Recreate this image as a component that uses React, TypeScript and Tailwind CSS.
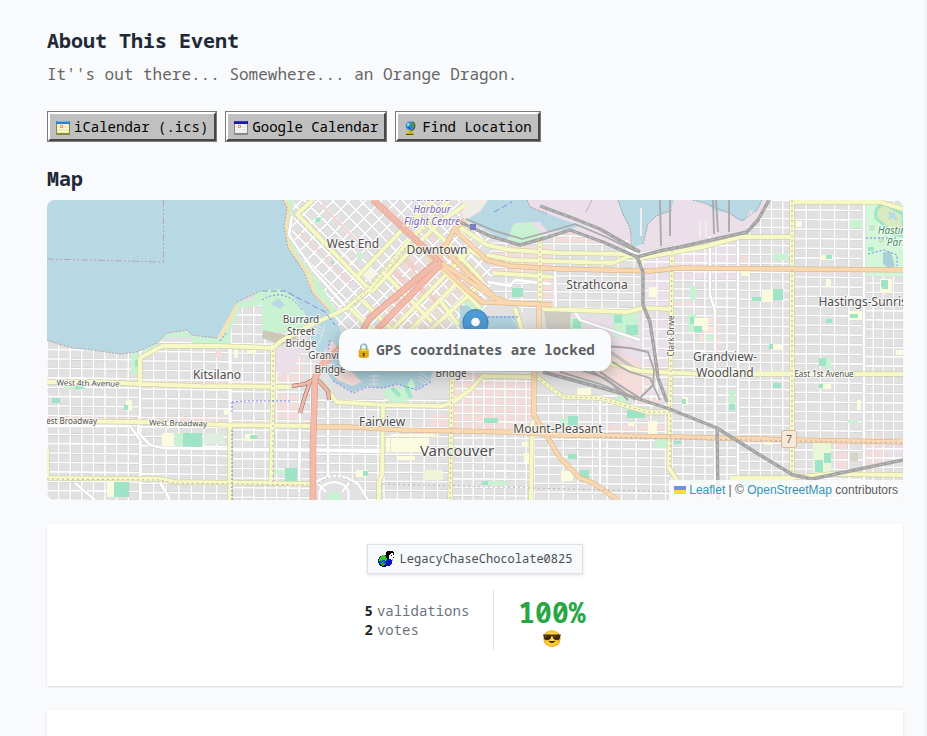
import React from 'react';

const MONO = "font-['Noto_Sans_Mono','DejaVu_Sans_Mono',monospace]";

/* ---------- map data ---------- */

type Region = { x0: number; y0: number; x1: number; y1: number; dx: number; dy: number };

const regions: Region[] = [
  { x0: 47, y0: 340, x1: 141, y1: 500, dx: 11.6, dy: 9.4 },
  { x0: 141, y0: 342, x1: 231, y1: 500, dx: 12.6, dy: 9.4 },
  { x0: 231, y0: 305, x1: 314, y1: 500, dx: 11.4, dy: 9.6 },
  { x0: 314, y0: 400, x1: 384, y1: 500, dx: 12.8, dy: 9 },
  { x0: 384, y0: 400, x1: 452, y1: 500, dx: 13.4, dy: 9 },
  { x0: 452, y0: 372, x1: 534, y1: 500, dx: 10.6, dy: 8.2 },
  { x0: 534, y0: 395, x1: 670, y1: 500, dx: 14.6, dy: 8.8 },
  { x0: 490, y0: 235, x1: 640, y1: 312, dx: 16, dy: 8 },
  { x0: 643, y0: 252, x1: 672, y1: 400, dx: 14, dy: 9.6 },
  { x0: 672, y0: 236, x1: 738, y1: 500, dx: 11, dy: 8.8 },
  { x0: 738, y0: 200, x1: 792, y1: 500, dx: 11.2, dy: 9 },
  { x0: 792, y0: 200, x1: 863, y1: 500, dx: 14.2, dy: 9.6 },
  { x0: 863, y0: 200, x1: 910, y1: 500, dx: 10.2, dy: 9.2 },
];

function gridPath(r: Region): string {
  const parts: string[] = [];
  for (let x = r.x0; x < r.x1; x += r.dx) parts.push(`M${x.toFixed(1)} ${r.y0}V${r.y1}`);
  for (let y = r.y0; y < r.y1; y += r.dy) {
    parts.push(`M${r.x0} ${y.toFixed(1)}L${r.x1} ${(y + (r.x1 - r.x0) * 0.012).toFixed(1)}`);
  }
  return parts.join('');
}

function diagonalPath(): string {
  const parts: string[] = [];
  for (let c = -60; c < 300; c += 14) parts.push(`M${270 + c} 190l170 172`);
  for (let c = 470; c < 830; c += 16) parts.push(`M${c - 190} 190l-170 172`);
  return parts.join('');
}

const orthogonal = regions.map(gridPath).join('');
const diagonal = diagonalPath();

type Patch = [number, number, number, number, string];

const PINK = '#f3dcd9';
const GREEN = '#c9f2d2';
const PITCH = '#9de5c6';
const SCHOOL = '#fbfbe0';
const LILAC = '#ebdfea';

const areas: Patch[] = [
  [493, 246, 60, 16, PINK], [490, 262, 62, 10, PINK], [536, 278, 22, 26, PINK], [552, 232, 82, 10, PINK],
  [672, 248, 66, 34, LILAC], [672, 268, 230, 5, PINK], [643, 255, 30, 54, LILAC], [643, 315, 29, 80, LILAC],
  [453, 374, 82, 54, PINK], [47, 416, 186, 5, PINK], [231, 420, 85, 8, PINK], [272, 358, 32, 24, PINK],
  [272, 395, 26, 24, PINK], [313, 425, 75, 5, PINK], [430, 415, 42, 14, PINK], [452, 425, 218, 8, PINK],
  [140, 380, 170, 4, PINK], [712, 370, 5, 44, PINK], [715, 315, 5, 50, PINK], [833, 440, 14, 30, PINK],
  [866, 436, 20, 34, PINK], [888, 440, 16, 20, LILAC], [700, 318, 14, 26, '#fae3dd'], [742, 252, 8, 24, PINK],
  [640, 395, 20, 10, PINK], [672, 302, 26, 6, PINK], [790, 204, 3, 290, PINK],
];

const patches: Patch[] = [
  [131, 352, 7, 22, GREEN], [135, 360, 4, 7, PITCH], [64, 384, 22, 5, GREEN], [75, 385, 9, 4, PITCH],
  [52, 398, 8, 5, PITCH], [126, 400, 6, 11, SCHOOL], [124, 405, 4, 5, PITCH], [162, 433, 12, 13, SCHOOL],
  [175, 433, 10, 13, GREEN], [183, 433, 19, 14, PITCH], [204, 433, 20, 11, '#dfeee0'], [107, 482, 8, 15, SCHOOL],
  [114, 482, 15, 15, PITCH], [245, 434, 12, 7, SCHOOL], [250, 435, 7, 4, PITCH], [224, 410, 6, 5, SCHOOL],
  [285, 468, 12, 14, PITCH], [274, 470, 10, 4, GREEN], [356, 470, 12, 7, SCHOOL], [363, 471, 5, 5, PITCH],
  [391, 438, 38, 14, SCHOOL], [386, 438, 4, 14, SCHOOL], [397, 456, 18, 4, SCHOOL], [423, 470, 20, 10, '#f0f4d8'],
  [391, 434, 44, 3, SCHOOL], [484, 418, 14, 5, PITCH], [522, 442, 6, 5, SCHOOL], [524, 453, 5, 9, SCHOOL],
  [484, 481, 24, 4, GREEN], [482, 481, 6, 4, PITCH], [561, 471, 12, 10, SCHOOL], [580, 470, 9, 8, PITCH],
  [568, 454, 9, 5, PITCH], [568, 416, 10, 10, PITCH], [560, 418, 7, 8, GREEN], [577, 388, 14, 8, SCHOOL],
  [627, 410, 18, 8, PITCH], [617, 395, 10, 10, GREEN], [648, 421, 9, 13, SCHOOL], [628, 422, 6, 4, SCHOOL],
  [655, 438, 14, 10, GREEN], [512, 288, 11, 9, PITCH], [613, 313, 25, 24, GREEN], [614, 315, 8, 8, PITCH],
  [626, 325, 12, 10, PITCH], [570, 318, 14, 12, GREEN], [573, 319, 8, 9, PITCH], [649, 287, 8, 10, SCHOOL],
  [690, 286, 6, 14, GREEN], [762, 290, 11, 12, SCHOOL], [773, 289, 10, 11, PITCH], [752, 297, 9, 4, PITCH],
  [774, 254, 14, 6, GREEN], [820, 255, 13, 5, SCHOOL], [826, 255, 6, 4, PITCH], [826, 279, 5, 8, SCHOOL],
  [850, 220, 12, 8, GREEN], [796, 221, 6, 6, SCHOOL], [849, 311, 13, 9, SCHOOL], [850, 314, 8, 4, PITCH],
  [826, 319, 6, 4, PITCH], [688, 314, 8, 18, GREEN], [694, 318, 14, 12, SCHOOL], [694, 326, 8, 6, PITCH],
  [706, 335, 7, 5, GREEN], [690, 317, 4, 7, PITCH], [773, 344, 9, 6, SCHOOL], [769, 344, 4, 5, PITCH],
  [741, 271, 9, 5, SCHOOL], [880, 279, 12, 14, SCHOOL], [881, 280, 7, 7, PITCH], [819, 358, 7, 8, PITCH],
  [826, 358, 5, 12, GREEN], [823, 384, 8, 5, SCHOOL], [819, 384, 4, 4, PITCH], [773, 383, 8, 5, PITCH],
  [729, 390, 6, 20, GREEN], [729, 404, 6, 6, PITCH], [682, 397, 6, 8, SCHOOL], [682, 399, 4, 5, PITCH],
  [813, 443, 18, 30, '#eaf6d8'], [815, 460, 8, 12, PITCH], [824, 453, 7, 10, PITCH], [850, 453, 8, 8, '#d9d2c6'],
  [848, 420, 10, 3, GREEN], [741, 476, 40, 12, GREEN], [743, 478, 7, 8, PITCH], [771, 477, 6, 8, PITCH],
  [674, 441, 7, 3, PITCH], [764, 441, 8, 4, SCHOOL], [896, 350, 8, 5, SCHOOL], [857, 400, 4, 10, SCHOOL],
  [315, 217, 7, 6, GREEN], [316, 218, 4, 4, PITCH], [331, 261, 3, 3, PITCH], [357, 253, 6, 6, GREEN],
  [385, 212, 5, 5, GREEN], [690, 480, 22, 4, '#cfe3c2'], [234, 350, 4, 8, SCHOOL],
  [247, 350, 9, 4, SCHOOL], [216, 350, 5, 8, PINK],
];

const yellowRoads = [
  'M47 382L100 382 140 384 200 386 290 387',
  'M140 383V358L162 346 220 346 273 348 281 341 307 327 347 308 368 290 390 265 403 248 440 210 450 200',
  'M273 345V387L271 484',
  'M47 421L140 422 227 425 313 426',
  'M47 478L160 479 174 482 260 483 313 484',
  'M230 425V500',
  'M47 450V478',
  'M320 382L337 402 383 405 443 406 453 402 470 390 483 376 534 377',
  'M383 405L382 475 379 482V500',
  'M452 368L451 440 450 500',
  'M532 422L531 500',
  'M540 236V305',
  'M537 377L563 397 600 398 647 412 670 412',
  'M672 252L671 340 669 468 677 480',
  'M605 362L640 371 700 374H903',
  'M792 200V500',
  'M792 202H880L903 209',
  'M670 253L703 247 740 237H792',
  'M455 224L487 245 510 250 560 253 623 254 640 258 670 253',
  'M487 255L513 260 613 263 630 256',
  'M493 273L553 277',
  'M543 309L627 312 643 308 670 309',
  'M313 200L297 214 357 277 372 292',
  'M357 277L400 232 435 200',
  'M372 292L410 251 440 222 465 205',
  'M350 308L392 350',
  'M362 300L392 330',
  'M383 272L432 322',
  'M410 236L480 308',
  'M392 330L470 250 490 262',
  'M410 330L458 282',
  'M430 330L480 285',
  'M449 245L482 280',
  'M425 222L460 255',
  'M440 300L458 325',
  'M515 308L525 340',
  'M730 478L790 478 830 474 903 475',
];

const orangeRoads = [
  'M313 427L350 427 403 430 513 432 560 435 680 437 797 440 903 442',
  'M534 368V415L560 458 580 478 593 483 618 500',
  'M539 306V330',
  'M453 228L487 260 510 266 560 269 650 271 680 268 903 270',
  'M440 262L493 297 510 303 552 305',
  'M440 245L470 275 493 295',
  'M437 262L465 288 482 302 540 304',
  'M437 262L455 228 465 220',
];

const redRoads = [
  'M313 500V445L315 378 322 365 340 348',
  'M363 330L370 318 437 262',
  'M377 330L441 264',
  'M373 200L400 225 441 264',
];

const ramps = ['M318 377L305 384 292 386', 'M310 382L305 396 300 413', 'M318 380L328 391 329 400'];

const rails = [
  'M460 222L490 236 520 245 545 238 570 230 603 242 637 257 663 250 680 247 747 232 758 220 769 200',
  'M637 257L643 272V305L650 322 655 355 658 378 667 402',
  'M543 372L620 393 667 408 717 428 755 452 793 475 812 479 850 471 903 460',
  'M717 428L718 500',
  'M540 206L570 217 600 229 640 252',
];

const sidings = [
  'M466 219L495 231 522 239 548 232 575 224 606 237 637 252',
  'M605 346L630 348 648 352 654 370 653 385 640 398 627 390 600 372',
  'M612 362L630 372 650 378 660 400',
  'M560 372L600 384 625 394',
  'M575 368L605 378 635 400',
  'M590 370L612 384 628 400',
  'M716 200L718 232',
  'M713 200L714 234',
  'M660 200L661 246',
  'M729 200V232',
  'M670 200V236',
];

const secondary = [
  'M292 216L289 235 313 270 347 308', 'M140 384V412L138 432 150 445 163 448 313 450 383 452', 'M231 450H383',
  'M300 413L299 492', 'M328 400V476', 'M738 238V500', 'M715 310V500', 'M710 236V295L715 310', 'M864 200V500',
  'M600 400V484', 'M488 282L510 286 515 280 550 284', 'M555 268L556 312', 'M575 312L580 320 640 340',
  'M627 240Q620 250 640 254L672 247', 'M47 426H130L140 440', 'M75 483L95 500', 'M160 482L170 500',
];

type Label = { x: number; y: number; s: number; t: string; c?: string; i?: boolean; r?: number };

const labels: Label[] = [
  { x: 353, y: 248, s: 12, t: 'West End' },
  { x: 437, y: 254, s: 12, t: 'Downtown' },
  { x: 432, y: 201, s: 9, t: 'Vancouver', c: '#7b68b5', i: true },
  { x: 432, y: 213, s: 10, t: 'Harbour', c: '#7b68b5', i: true },
  { x: 432, y: 225, s: 10, t: 'Flight Centre', c: '#7b68b5', i: true },
  { x: 597, y: 289, s: 12, t: 'Strathcona' },
  { x: 301, y: 323, s: 10, t: 'Burrard' },
  { x: 301, y: 335, s: 10, t: 'Street' },
  { x: 301, y: 347, s: 10, t: 'Bridge' },
  { x: 329, y: 359, s: 10, t: 'Granville' },
  { x: 330, y: 373, s: 10, t: 'Bridge' },
  { x: 451, y: 377, s: 10, t: 'Bridge' },
  { x: 217, y: 379, s: 12, t: 'Kitsilano' },
  { x: 382, y: 426, s: 12, t: 'Fairview' },
  { x: 457, y: 456, s: 15, t: 'Vancouver' },
  { x: 558, y: 433, s: 12, t: 'Mount-Pleasant' },
  { x: 725, y: 361, s: 12, t: 'Grandview-' },
  { x: 725, y: 377, s: 12, t: 'Woodland' },
  { x: 866, y: 306, s: 12, t: 'Hastings-Sunrise' },
  { x: 897, y: 234, s: 10, t: 'Hastings', c: '#3f8a5c', i: true },
  { x: 897, y: 246, s: 10, t: 'Park', c: '#3f8a5c', i: true },
  { x: 88, y: 386, s: 8, t: 'West 4th Avenue', r: 1 },
  { x: 68, y: 424, s: 8, t: 'West Broadway' },
  { x: 178, y: 426, s: 8, t: 'West Broadway', r: 1 },
  { x: 824, y: 377, s: 8, t: 'East 1st Avenue' },
  { x: 674, y: 336, s: 8, t: 'Clark Drive', r: -90 },
];

const stroke = (paths: string[], color: string, width: number, dash?: string) =>
  paths.map((d) => (
    <path key={d + color} d={d} stroke={color} strokeWidth={width} strokeDasharray={dash} fill="none" strokeLinejoin="round" />
  ));

function CityMap() {
  return (
    <svg
      className="block h-full w-full"
      viewBox="47 200 856 300"
      preserveAspectRatio="xMidYMid slice"
      role="img"
      aria-label="Map of Vancouver"
    >
      <defs>
        <clipPath id="peninsula">
          <path d="M283 200H466L491 238V300L468 332 340 345 300 270Z" />
        </clipPath>
        <clipPath id="flatland">
          <path d="M47 335H231V300H300L340 345V380H452V340L535 300 491 300V238L560 228 640 256 735 236 760 215 772 200H903V500H47Z" />
        </clipPath>
      </defs>

      <rect x="47" y="200" width="856" height="300" fill="#e1e1e1" />
      {areas.map(([x, y, w, h, c]) => (
        <rect key={`${x}-${y}-${w}`} x={x} y={y} width={w} height={h} fill={c} />
      ))}
      <path d="M400 262L437 228 490 280 440 330H380Z" fill="#ecdcd9" />
      <path d="M600 345L655 350 655 385 640 400 600 380 540 375V368Z" fill={PINK} />
      <path d="M556 312L610 320 660 345V372L600 345 556 332Z" fill={LILAC} />

      <g clipPath="url(#flatland)" fill="none">
        <path d={orthogonal} stroke="#cecece" strokeWidth="2.4" />
        <path d={orthogonal} stroke="#fff" strokeWidth="1.6" />
      </g>
      <g clipPath="url(#peninsula)" fill="none">
        <path d={diagonal} stroke="#cacaca" strokeWidth="2.8" />
        <path d={diagonal} stroke="#fff" strokeWidth="2" />
        <path d="M392 270l12 12M404 258l12 12M416 284l10 10M430 296l10 10M410 300l9 9M395 296l9 9M450 270l8 8M425 246l6 6" stroke="#f1cfcb" strokeWidth="5" />
        <path d="M300 232l50 51M322 205l45 46M385 205l30 30" stroke="#f3d6d2" strokeWidth="2" />
        <path d="M362 275L370 267 377 274 369 282Z" fill="#f6f4e4" />
      </g>
      {patches.map(([x, y, w, h, c]) => (
        <rect key={`${x}-${y}-${w}-${h}`} x={x} y={y} width={w} height={h} fill={c} />
      ))}
      <path d="M544 312H571L569 340H548Z" fill="#cfccc3" />
      <path d="M545 340L600 345 640 372" fill="none" stroke="#c5c1c2" strokeWidth="3" />

      {/* port lands and inlet */}
      <path d="M460 200H771L757 222 735 234 680 246 637 255 570 228 520 243 460 220Z" fill={LILAC} />
      <path d="M462 200H492L474 214 463 222Z" fill="#f0ece6" />
      <path d="M488 200H592L586 212 574 216 588 224 566 230 548 232 540 222 515 223 507 240 493 234 466 220 480 212Z" fill="#b8d9e3" />
      <path d="M527 200H592L586 212 612 222 640 250 606 238 575 224 548 214 530 207Z" fill={LILAC} />
      <path d="M507 240L513 225 530 222 545 236 522 243Z" fill={GREEN} />
      <path d="M618 200H674L670 212 656 216 648 224 643 244 633 247 630 228 622 214Z" fill="#b8d9e3" />
      <path d="M693 200H762L757 212 750 210 745 221 738 220 729 213 715 211 707 204Z" fill="#b8d9e3" />
      <path d="M641 208v28M700 222v16M706 222v15" stroke="#f2eeee" strokeWidth="2" />
      <path d="M527 200L530 207 548 214M592 200L586 212M618 200L624 216 630 228 632 247M643 244L648 224 656 216 672 210M693 200L707 204 729 213 742 221 757 210 762 200" fill="none" stroke="#a9a2ab" strokeDasharray="2 1" />

      {/* western parks and beach */}
      <path d="M283 200L294 200 291 232 300 258 318 280 337 312 345 322 330 312 318 302 308 282 286 250Z" fill={GREEN} />
      <path d="M283 200L288 206 287 240 294 256 310 276 314 294 330 310" fill="none" stroke="#f3e2b4" strokeWidth="4" />
      <path d="M137 355L157 343 167 334 187 331 192 336 217 339 237 303 253 299 261 288 285 288 304 308 304 332 262 332 262 305 240 308 230 332 231 344H192V337H166L150 350Z" fill={GREEN} />
      <path d="M220 338L237 304" stroke="#f3e2b4" strokeWidth="4" />
      <path d="M250 295L262 300M263 330L300 338 282 345 262 338Z" fill="#ccc9bb" />
      <path d="M270 347H300L302 352 290 375 276 372Z" fill={LILAC} />
      <path d="M271 304L278 298 285 305 280 309Z" fill="#b8d9e3" />

      {/* English Bay and False Creek */}
      <path
        d="M47 200H283L287 208 284 226 288 248 297 260 304 272 307 282 312 292 323 305 330 312 337 322 345 342 345 352 338 370 318 352 312 345 308 320 302 308 293 297 280 289 262 290 250 296 237 302 217 338 204 337 192 335 187 330 167 333 157 343 137 352 120 354 100 351 73 348 58 344 47 340Z"
        fill="#b8d9e3"
      />
      <path
        d="M47 340L58 344 73 348 100 351 120 354 137 352 157 343 167 333 187 330 192 335 217 338M237 302L250 296 262 290M283 200L287 208 284 226 288 248 304 272 312 292 330 312"
        fill="none" stroke="#b3a5b0" strokeDasharray="2 1.5"
      />
      <path d="M322 366L333 381 353 392 367 386 383 388 397 384 417 389 430 382 434 366Z" fill="#b0d2dd" />
      <path d="M329 370L336 368 352 372 362 382 352 386 338 380Z" fill={PINK} />
      <path d="M383 396L386 388 404 388 412 378 415 386 406 402 390 402Z" fill={GREEN} />
      <path d="M392 388l8 8M405 384l6 14" stroke={PITCH} strokeWidth="4" />
      <path d="M369 376h10M369 380h10M369 384h10M374 374v14M420 372l10 8M418 376l12 8M418 380l12 6" stroke="#dfe6e8" strokeWidth="1" />
      <path d="M460 306L476 304 487 316H520L524 332H460Z" fill="#b0d2dd" />
      <path d="M462 302L476 300 484 308 476 312Z" fill={GREEN} />
      <path d="M310 322l12 6M311 326l12 6M312 330l12 6M316 318l-6 20M320 320l-6 20M325 324l-6 20M512 318l8 12" stroke="#dfe6ea" strokeWidth="1" />
      <path d="M324 352L332 341 338 348 331 358Z" fill={PINK} />

      {/* Hastings Park */}
      <path d="M866 204H903V276H866Z" fill="#d1f6d8" />
      <path d="M876 218Q874 204 886 205L903 214V236L894 234Z" fill="#d7eac0" stroke={PITCH} strokeWidth="3" />
      <path d="M889 212l8 8M889 219l6-6" stroke="#b8d9e3" strokeWidth="3" />
      <circle cx="872" cy="228" r="4" fill="#c4e9c9" stroke="#e9f7e9" />
      <circle cx="881" cy="240" r="4" fill="#c4e9c9" stroke="#e9f7e9" />
      <path d="M883 252h8l4 14-6 2-6-4z" fill="#a9cfd8" />
      <path d="M868 247h6v4h-6zM882 284h6v5h-6z" fill={PITCH} />

      {/* white secondary streets */}
      {stroke(secondary, '#c9c9c9', 3.6)}
      {stroke(secondary, '#ffffff', 2.8)}

      {/* crescent */}
      <path d="M313 500V484Q335 468 358 484L368 500" fill="#e1e1e1" stroke="#fff" strokeWidth="2" />
      <path d="M320 500Q316 484 334 482 352 484 348 500" fill="none" stroke="#fff" strokeWidth="2" />
      <path d="M318 484l8 8M350 482l-8 10" stroke="#fff" strokeWidth="2" />
      <ellipse cx="334" cy="497" rx="7" ry="5" fill={GREEN} />

      {stroke(yellowRoads, '#cbcc98', 5)}
      {stroke(yellowRoads, '#f6f8c6', 4)}
      {stroke(orangeRoads, '#d9ae7c', 5)}
      {stroke(orangeRoads, '#f9d7b0', 4)}
      {stroke(rails, '#a2a2a2', 3.4)}
      {stroke(rails, '#c6c6c6', 0.8, '5 3')}
      {stroke(sidings, '#a8a8a8', 1.8)}
      {stroke(ramps, '#7c6a66', 4)}
      {stroke(ramps, '#f2b7a7', 3)}
      {stroke(redRoads, '#dc9484', 6.4)}
      {stroke(redRoads, '#f4bbab', 5.4)}

      {stroke(
        ['M273 350V484', 'M452 372L450 500', 'M47 479L160 480 174 483 313 485', 'M540 236V305', 'M672 250L670 468', 'M792 200V500',
          'M537 377L563 397 600 398 647 412 670 412', 'M350 308L440 210', 'M383 484L680 492', 'M600 437L903 443', 'M375 202L440 264', 'M318 484Q335 468 352 484'],
        '#bfafbd', 1, '2 3',
      )}
      {stroke(['M47 259L163 262', 'M163.500 200V262'], '#b3a6bd', 1, '7 2 2 2 2 2')}
      {stroke(
        ['M232 402L245 401 290 401', 'M232 402V414', 'M220 341L226 333', 'M262 300Q285 286 302 310', 'M333 381L353 393 367 387 383 388 397 384 417 390 431 382',
          'M488 317H520', 'M866 238H898', 'M868 254L884 250 897 255V266', 'M232 430V500', 'M330 340L326 360'],
        '#7d7df0', 1, '2 2',
      )}
      {stroke(['M262 291H285L325 312 335 325', 'M494 212L512 202', 'M700 486H760'], '#7373e6', 0.8, '6 3')}
      <rect x="470" y="224" width="6" height="6" fill="#7a7fba" />

      {labels.map((l) => (
        <text
          key={`${l.t}-${l.x}-${l.y}`}
          x={l.x}
          y={l.y}
          fontSize={l.s}
          textAnchor="middle"
          fontStyle={l.i ? 'italic' : 'normal'}
          fill={l.c ?? '#4d4d4d'}
          stroke="#ffffff"
          strokeOpacity="0.75"
          strokeWidth="2"
          paintOrder="stroke"
          transform={l.r ? `rotate(${l.r} ${l.x} ${l.y})` : undefined}
          className="font-['Noto_Sans',sans-serif]"
        >
          {l.t}
        </text>
      ))}

      <rect x="781.500" y="430.500" width="15" height="17" rx="2" fill="#f8e8d8" stroke="#d6b89a" />
      <text x="789" y="443" fontSize="10" textAnchor="middle" fill="#6b5a4c" className="font-['Noto_Sans',sans-serif]">7</text>

      {/* marker */}
      <path d="M475.500 309.500a12.500 12.500 0 0 0-12.500 12.500c0 9 8 16 12.500 28 4.500-12 12.500-19 12.500-28a12.500 12.500 0 0 0-12.500-12.500z" fill="#4f9ad2" stroke="#3a7db4" />
      <circle cx="475.500" cy="322" r="4.300" fill="#fff" />
    </svg>
  );
}

/* ---------- small icons ---------- */

function CalendarIcon({ page, shade, bar, light }: { page: string; shade: string; bar: string; light: string }) {
  return (
    <svg width="14" height="14" viewBox="0 0 14 14" shapeRendering="crispEdges" aria-hidden="true">
      <rect x="0" y="1" width="14" height="13" fill={shade} />
      <rect x="1" y="2" width="12" height="10" fill={page} />
      <rect x="0" y="0" width="14" height="3" fill={bar} />
      <rect x="1" y="0" width="12" height="1" fill={light} />
      <path d="M1 4.500h11M1 7.500h11M1 10.500h11" stroke="#fff" strokeOpacity="0.6" />
      <rect x="4" y="4" width="3" height="3" fill="#dc9a94" />
      <rect x="5" y="5" width="1" height="1" fill="#fff" />
    </svg>
  );
}

function GlobeIcon() {
  return (
    <svg width="14" height="14" viewBox="0 0 14 14" aria-hidden="true">
      <path d="M8.500 .8Q11.500 3 10.500 6.500 9.500 9.500 6 9.700" fill="none" stroke="#5a5a20" strokeWidth="1.400" />
      <circle cx="6" cy="4.800" r="4.300" fill="#2c86dc" />
      <path d="M3 2.500Q5 .8 6 2.500L5 5 3 5.500Z" fill="#7fd8e8" />
      <path d="M7 1.500Q10 2.500 10 5L8 7 6.500 4Z" fill="#3f9c3a" />
      <path d="M3 6.500L6 6 6.500 8.500Z" fill="#1b4fa8" />
      <path d="M5 9.500h2.500v2h2.500l-1 2H2.500l-1-1.500 3.500-.5z" fill="#c8b400" />
      <path d="M2 13.500h7.500" stroke="#5f5600" />
      <path d="M1.500 8.500L4 10.500" stroke="#d8c520" strokeWidth="1.500" />
    </svg>
  );
}

function AvatarIcon() {
  return (
    <svg width="16" height="16" viewBox="0 0 16 16" shapeRendering="crispEdges" aria-hidden="true">
      <circle cx="6" cy="10" r="6" fill="#0a0a60" />
      <circle cx="5.500" cy="9.500" r="5" fill="#0b4ce0" />
      <path d="M2 6l3-2 3 1 1 3-1 2-3-1-2 1-2 0z" fill="#37c81c" />
      <path d="M2 12l3-1 2 2-2 2-2-1z" fill="#2ba516" />
      <path d="M8 1l2-1h5l1 2-3 1-2 3-1 2-2-1z" fill="#000" />
      <path d="M12 3l2-1 2 1v2l-1 2-2 1-2-2z" fill="#fff" />
      <path d="M15 2h1v2h-1zM13 4h1v1h-1zM15 6h1v1h-1z" fill="#000" />
      <path d="M9 8l3 0 2 1v4l-3 2-4 0z" fill="#0a14b8" />
      <path d="M13 9l2-2v3z" fill="#8fb2ff" />
    </svg>
  );
}

function RetroButton({ icon, children }: { icon: React.ReactNode; children: React.ReactNode }) {
  return (
    <button type="button" className="border border-[#7b7b7b] bg-[#c0c0c0] text-sm leading-[19px] text-black">
      <span className="flex items-center gap-1 border-2 border-t-white border-r-[#484848] border-b-[#484848] border-l-white px-1.5 py-[3px]">
        <span className="flex h-4 w-3.5 items-end">{icon}</span>
        {children}
      </span>
    </button>
  );
}

export default function App() {
  return (
    <main className={`flex min-h-screen flex-col border-r-2 border-[#f0f3f6] bg-[#f9fafc] pr-[22px] pl-[47px] ${MONO}`}>
      <section className="pt-[26px]">
        <h2 className="text-xl leading-[30px] font-bold text-[#1f2937]">About This Event</h2>
        <p className="mt-1.5 text-base leading-6 text-[#666]">It''s out there... Somewhere... an Orange Dragon.</p>
        <div className="mt-[25px] flex flex-wrap gap-2">
          <RetroButton icon={<CalendarIcon page="#f1edb2" shade="#8c8a38" bar="#2f7fd8" light="#6fb0ee" />}>iCalendar (.ics)</RetroButton>
          <RetroButton icon={<CalendarIcon page="#ececec" shade="#8a8a8a" bar="#1a1a9c" light="#3838c0" />}>Google Calendar</RetroButton>
          <RetroButton icon={<GlobeIcon />}>Find Location</RetroButton>
        </div>
      </section>

      <section className="mt-[22px]">
        <h2 className="text-xl leading-[30px] font-bold text-[#1f2937]">Map</h2>
        <div className="relative mt-1.5 h-[300px] overflow-hidden rounded-lg">
          <CityMap />
          <div className="absolute inset-0 flex items-center justify-center">
            <div className="flex items-center gap-1 rounded-xl bg-[#fafbfd] px-4 py-[11px] text-sm leading-5 font-bold text-[#5c5f63] shadow-[0_4px_16px_rgba(0,0,0,0.3)]">
              <span className="w-[17px]">🔒</span>
              <span>GPS coordinates are locked</span>
            </div>
          </div>
          <div className="absolute right-0 bottom-0 flex items-center bg-white/80 px-[5px] font-['Liberation_Sans',Arial,sans-serif] text-xs leading-5 text-[#5c5c5c]">
            <a href="#leaflet" className="flex items-center gap-[3px] text-[#3393b9]">
              <svg width="12" height="8" viewBox="0 0 12 8" aria-hidden="true">
                <path fill="#6b94e3" d="M0 0h12v4H0z" />
                <path fill="#fddd33" d="M0 4h12v4H0z" />
              </svg>
              Leaflet
            </a>
            <span className="whitespace-pre"> | © </span>
            <a href="#openstreetmap" className="text-[#3393b9]">OpenStreetMap</a>
            <span className="whitespace-pre"> contributors</span>
          </div>
        </div>
      </section>

      <section className="mt-6 flex flex-col items-center bg-white pt-5 pb-9 shadow-[0_1px_2px_rgba(0,0,0,0.12)]">
        <a href="#profile" className="flex items-center gap-1.5 border border-[#dee2e6] bg-[#f8f9fa] px-2.5 py-1 text-xs leading-5 text-[#495057] shadow-[0_1px_3px_rgba(0,0,0,0.12)]">
          <AvatarIcon />
          LegacyChaseChocolate0825
        </a>
        <div className="mt-4 flex h-[60px] items-stretch text-sm">
          <div className="flex flex-col justify-center pr-6 leading-[19px] text-[#6c757d]">
            <div className="flex gap-1"><b className="text-[#212529]">5</b>validations</div>
            <div className="flex gap-1"><b className="text-[#212529]">2</b>votes</div>
          </div>
          <div className="flex flex-col items-center border-l border-[#dee2e6] pt-2 pl-6">
            <strong className="text-[28px] leading-[29px] font-bold text-[#28a745]">100%</strong>
            <span className="text-base leading-[22px]">😎</span>
          </div>
        </div>
      </section>

      <section className="mt-6 min-h-6 flex-1 bg-white shadow-[0_1px_4px_rgba(0,0,0,0.12)]" />
    </main>
  );
}
